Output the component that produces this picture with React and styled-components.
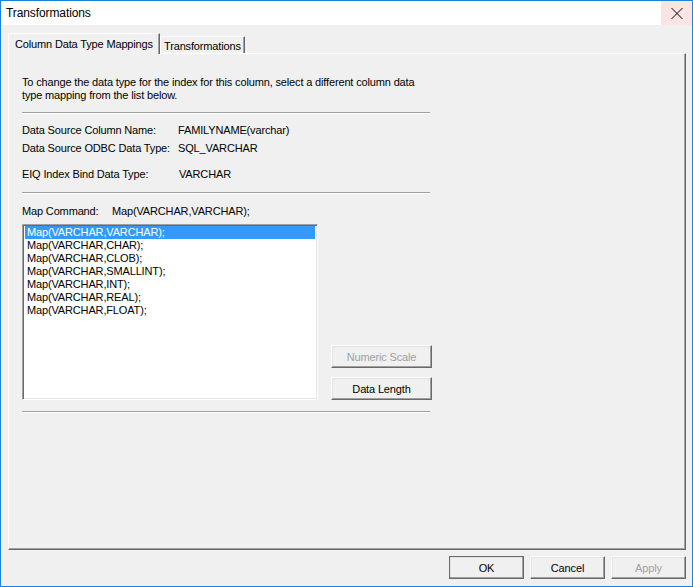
import React, {useState} from 'react';
import styled, {createGlobalStyle} from 'styled-components';

const GlobalStyle = createGlobalStyle`
  html, body {
    margin: 0;
    padding: 0;
    background: #ffffff;
  }
  body {
    font-family: 'Liberation Sans', Arial, sans-serif;
    font-size: 11px;
    letter-spacing: -0.15px;
    color: #000000;
  }
`;

const Dialog = styled.div`
  width: 693px;
  height: 587px;
  box-sizing: border-box;
  border: 1px solid #1883d7;
  display: flex;
  flex-direction: column;
  background: #f0f0f0;
`;

const TitleBar = styled.div`
  height: 24px;
  background: #ffffff;
  display: flex;
  align-items: center;
  justify-content: space-between;
  padding-left: 5px;
`;

const Title = styled.span`
  font-size: 12px;
  line-height: 12px;
  letter-spacing: -0.1px;
  margin-top: -1px;
`;

const CloseButton = styled.div`
  width: 31px;
  height: 24px;
  background: #fde4e4;
  display: flex;
  align-items: center;
  justify-content: center;
`;

const Body = styled.div`
  flex: 1;
  display: flex;
  flex-direction: column;
  padding: 8px 6px 0 7px;
`;

const TabStrip = styled.div`
  display: flex;
  align-items: flex-end;
  height: 20px;
  position: relative;
  z-index: 1;
`;

const Tab = styled.div`
  box-sizing: border-box;
  height: ${p => (p.$active ? '21px' : '17px')};
  margin-bottom: ${p => (p.$active ? '-1px' : '0')};
  padding: ${p => (p.$active ? '4px 0 0 6px' : '3px 0 0 3px')};
  width: ${p => p.$width}px;
  background: #f0f0f0;
  border-top: 1px solid #ffffff;
  border-left: 1px solid #ffffff;
  border-right: 1px solid #696969;
  box-shadow: inset -1px 0 0 #a0a0a0;
  line-height: 12px;
  white-space: nowrap;
`;

const Panel = styled.div`
  box-sizing: border-box;
  height: 497px;
  border-top: 1px solid #ffffff;
  border-left: 1px solid #ffffff;
  border-right: 1px solid #696969;
  border-bottom: 1px solid #696969;
  box-shadow: inset -1px -1px 0 #a0a0a0;
  padding: 22px 0 0 13px;
  display: flex;
  flex-direction: column;
`;

const Intro = styled.p`
  margin: 0;
  line-height: 13px;
`;

const Separator = styled.div`
  width: 408px;
  height: 0;
  border-top: 1px solid #a0a0a0;
  border-bottom: 1px solid #ffffff;
  margin-top: ${p => p.$top}px;
`;

const InfoRow = styled.div`
  display: flex;
  line-height: 13px;
  margin-top: ${p => p.$top}px;
`;

const Label = styled.span`
  width: ${p => p.$width}px;
  flex-shrink: 0;
`;

const MapArea = styled.div`
  display: flex;
  align-items: flex-end;
  gap: 13px;
  margin-top: 6px;
`;

const ListBox = styled.div`
  box-sizing: border-box;
  width: 296px;
  height: 176px;
  background: #ffffff;
  border-top: 1px solid #a0a0a0;
  border-left: 1px solid #a0a0a0;
  border-right: 1px solid #ffffff;
  border-bottom: 1px solid #ffffff;
  box-shadow: inset 1px 1px 0 #696969, inset -1px -1px 0 #e3e3e3;
  padding: 1px 2px;
`;

const ListItem = styled.div`
  height: 13px;
  line-height: 13px;
  padding-left: 2px;
  background: ${p => (p.$selected ? '#3399ff' : 'transparent')};
  color: ${p => (p.$selected ? '#ffffff' : '#000000')};
  cursor: default;
`;

const ButtonColumn = styled.div`
  display: flex;
  flex-direction: column;
  gap: 9px;
`;

const Button = styled.div`
  box-sizing: border-box;
  width: ${p => p.$width}px;
  height: ${p => p.$height}px;
  background: #f0f0f0;
  border-top: 1px solid #ffffff;
  border-left: 1px solid #ffffff;
  border-right: 1px solid #696969;
  border-bottom: 1px solid #696969;
  box-shadow: inset -1px -1px 0 #a0a0a0, inset 1px 1px 0 #e3e3e3;
  display: flex;
  align-items: center;
  justify-content: center;
  color: ${p => (p.$disabled ? '#a0a0a0' : '#000000')};
  ${p => (p.$default ? 'outline: 1px solid #696969; outline-offset: -1px;' : '')}
`;

const Footer = styled.div`
  flex: 1;
  display: flex;
  justify-content: flex-end;
  align-items: flex-start;
  gap: 6px;
  padding-top: 6px;
`;

const mappings = [
  'Map(VARCHAR,VARCHAR);',
  'Map(VARCHAR,CHAR);',
  'Map(VARCHAR,CLOB);',
  'Map(VARCHAR,SMALLINT);',
  'Map(VARCHAR,INT);',
  'Map(VARCHAR,REAL);',
  'Map(VARCHAR,FLOAT);',
];

const App = () => {
  const [selected, setSelected] = useState(0);

  return (
    <>
      <GlobalStyle />
      <Dialog>
        <TitleBar>
          <Title>Transformations</Title>
          <CloseButton>
            <svg width="12" height="11" viewBox="0 0 12 11">
              <path d="M0.5 0 L11.5 11 M11.5 0 L0.5 11" stroke="#000" strokeWidth="1" />
            </svg>
          </CloseButton>
        </TitleBar>
        <Body>
          <TabStrip>
            <Tab $active $width={152}>Column Data Type Mappings</Tab>
            <Tab $width={85}>Transformations</Tab>
          </TabStrip>
          <Panel>
            <Intro>
              To change the data type for the index for this column, select a different column data
              <br />
              type mapping from the list below.
            </Intro>
            <Separator $top={10} />
            <InfoRow $top={10}>
              <Label $width={156}>Data Source Column Name:</Label>
              <span>FAMILYNAME(varchar)</span>
            </InfoRow>
            <InfoRow $top={5}>
              <Label $width={156}>Data Source ODBC Data Type:</Label>
              <span>SQL_VARCHAR</span>
            </InfoRow>
            <InfoRow $top={13}>
              <Label $width={157}>EIQ Index Bind Data Type:</Label>
              <span>VARCHAR</span>
            </InfoRow>
            <Separator $top={11} />
            <InfoRow $top={11}>
              <Label $width={90}>Map Command:</Label>
              <span>Map(VARCHAR,VARCHAR);</span>
            </InfoRow>
            <MapArea>
              <ListBox>
                {mappings.map((m, i) => (
                  <ListItem key={m} $selected={i === selected} onClick={() => setSelected(i)}>
                    {m}
                  </ListItem>
                ))}
              </ListBox>
              <ButtonColumn>
                <Button $width={101} $height={23} $disabled>Numeric Scale</Button>
                <Button $width={101} $height={23}>Data Length</Button>
              </ButtonColumn>
            </MapArea>
            <Separator $top={11} />
          </Panel>
          <Footer>
            <Button $width={75} $height={23} $default>OK</Button>
            <Button $width={75} $height={23}>Cancel</Button>
            <Button $width={75} $height={23} $disabled>Apply</Button>
          </Footer>
        </Body>
      </Dialog>
    </>
  );
};

export default App;
